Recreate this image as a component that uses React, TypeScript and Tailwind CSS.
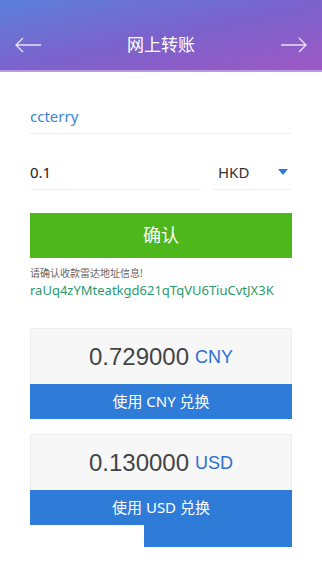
const font = { fontFamily: '"Noto Sans", "Noto Sans CJK SC", sans-serif' };

function Arrow({ dir }: { dir: "left" | "right" }) {
  return (
    <svg width="28" height="16" viewBox="0 0 28 16" fill="none" stroke="#e6e0f5" strokeWidth="1.4" className={dir === "right" ? "rotate-180" : ""}>
      <path d="M27 8H2M9 1L2 8l7 7" />
    </svg>
  );
}

const rates = [
  { value: "0.729000", cur: "CNY" },
  { value: "0.130000", cur: "USD" },
];

export default function App() {
  return (
    <div className="w-[322px] h-[572px] bg-white overflow-hidden" style={font}>
      <div className="h-[72px] bg-gradient-to-br from-[#5a80da] via-[#7a62cc] to-[#9d57c4] border-b-2 border-[#b99ae0] flex items-center justify-between px-[14px] pt-[20px]">
        <Arrow dir="left" />
        <span className="text-white text-[17px]">网上转账</span>
        <Arrow dir="right" />
      </div>

      <div className="px-[30px]">
        <div className="mt-[31px] border-b border-[#eeeeee] pb-[4px] text-[15px] text-[#3a86d6] leading-[26px]">ccterry</div>

        <div className="mt-[25px] flex gap-[10px]">
          <div className="flex-1 border-b border-[#eeeeee] pb-[4px] text-[15px] text-[#222] leading-[26px]">0.1</div>
          <div className="w-[80px] border-b border-[#eeeeee] pb-[4px] flex items-center justify-between pl-[6px] pr-[4px] text-[15px] text-[#333] leading-[26px]">
            HKD
            <span className="w-0 h-0 border-l-[5px] border-r-[5px] border-t-[6px] border-l-transparent border-r-transparent border-t-[#2c7ad8]" />
          </div>
        </div>

        <button className="mt-[23px] w-full h-[45px] bg-[#4db71b] text-white text-[18px]">确认</button>

        <p className="mt-[8px] text-[10px] text-[#666] leading-[14px]">请确认收款雷达地址信息!</p>
        <p className="text-[13px] text-[#2a9a6c] leading-[20px]">raUq4zYMteatkgd621qTqVU6TiuCvtJX3K</p>

        <div className="mt-[28px] flex flex-col">
          {rates.map((r, i) => (
            <div key={r.cur} className={i > 0 ? "mt-[15px]" : ""}>
              <div className="h-[56px] bg-[#f7f7f8] border border-b-0 border-[#ececec] flex items-center justify-center gap-[6px]">
                <span className="text-[24px] text-[#444]" style={{ fontFamily: '"Liberation Sans", sans-serif' }}>{r.value}</span>
                <span className="text-[18px] text-[#2c6fd0] mt-[2px]" style={{ fontFamily: '"Liberation Sans", sans-serif' }}>{r.cur}</span>
              </div>
              <button className="w-full h-[35px] bg-[#2f7bd8] text-white text-[15px]">使用 {r.cur} 兑换</button>
            </div>
          ))}
          <div className="ml-[114px] h-[22px] bg-[#2f7bd8]" />
        </div>
      </div>
    </div>
  );
}
